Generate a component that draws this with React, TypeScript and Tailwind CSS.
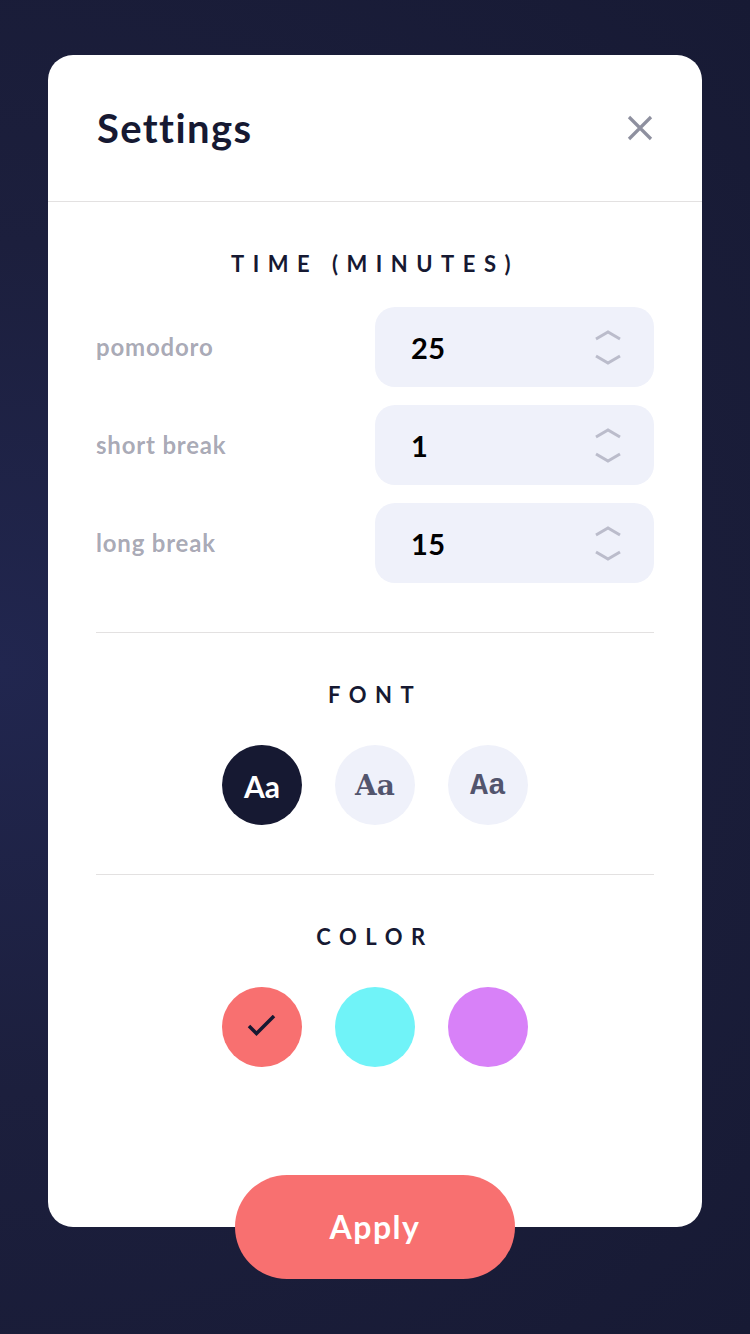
import React from "react";

const Chevron = ({ up }: { up?: boolean }) => (
  <svg width="28" height="12" viewBox="0 0 28 12" fill="none">
    <path
      d={up ? "M2 10L14 3L26 10" : "M2 2L14 9L26 2"}
      stroke="#1E213F"
      strokeOpacity="0.25"
      strokeWidth="3"
    />
  </svg>
);

const Row = ({ label, value }: { label: string; value: string }) => (
  <div className="flex items-center justify-between">
    <span className="text-[24px] font-bold leading-none tracking-[0.8px] text-[#1E213F]/40">{label}</span>
    <div className="flex h-[80px] w-[279px] items-center justify-between rounded-[20px] bg-[#EFF1FA] pl-[36px] pr-[32px]">
      <span className="text-[29px] font-bold leading-none tracking-[0.5px] text-black">{value}</span>
      <div className="flex flex-col gap-[13px]">
        <Chevron up />
        <Chevron />
      </div>
    </div>
  </div>
);

const Heading = ({ children }: { children: React.ReactNode }) => (
  <h2 className="text-center text-[22px] font-bold leading-[28px] tracking-[8.5px] text-[#161932]">
    {children}
  </h2>
);

export default function App() {
  return (
    <div
      className="flex min-h-[1334px] flex-col items-stretch bg-[radial-gradient(ellipse_at_0%_50%,#21264f_0%,#1c1f3d_45%,#171a34_100%)] px-[48px] pt-[55px]"
      style={{ fontFamily: "Lato, 'Noto Sans', sans-serif" }}
    >
      <div className="rounded-[25px] bg-white">
        <div className="flex h-[147px] items-center justify-between border-b border-[#E3E1E1] pl-[49px] pr-[49px]">
          <h1 className="text-[40px] font-bold leading-none tracking-[1.4px] text-[#161932]">Settings</h1>
          <svg width="26" height="26" viewBox="0 0 26 26" fill="none">
            <path d="M2 2L24 24M24 2L2 24" stroke="#1E213F" strokeOpacity="0.5" strokeWidth="3.2" />
          </svg>
        </div>
        <div className="px-[48px] pb-[160px] pt-[48px]">
          <Heading>TIME (MINUTES)</Heading>
          <div className="mt-[29px] flex flex-col gap-[18px]">
            <Row label="pomodoro" value="25" />
            <Row label="short break" value="1" />
            <Row label="long break" value="15" />
          </div>
          <div className="mt-[49px] border-t border-[#E3E1E1] pt-[48px]">
            <Heading>FONT</Heading>
            <div className="mt-[36px] flex justify-center gap-[33px]">
              <div className="flex h-[80px] w-[80px] items-center justify-center rounded-full bg-[#161932] pt-[2px] text-[30px] font-bold text-white">
                Aa
              </div>
              <div
                className="flex h-[80px] w-[80px] items-center justify-center rounded-full bg-[#EFF1FA] pt-[2px] text-[28px] font-bold text-[#1E213F]/75"
                style={{ fontFamily: "'DejaVu Serif', serif" }}
              >
                Aa
              </div>
              <div
                className="flex h-[80px] w-[80px] items-center justify-center rounded-full bg-[#EFF1FA] pt-[2px] text-[30px] font-bold text-[#1E213F]/75"
                style={{ fontFamily: "'Liberation Mono', monospace" }}
              >
                Aa
              </div>
            </div>
          </div>
          <div className="mt-[49px] border-t border-[#E3E1E1] pt-[48px]">
            <Heading>COLOR</Heading>
            <div className="mt-[36px] flex justify-center gap-[33px]">
              <div className="flex h-[80px] w-[80px] items-center justify-center rounded-full bg-[#F87070]">
                <svg width="30" height="24" viewBox="0 0 30 24" fill="none">
                  <path d="M2 11L9.5 18.5L27 1" stroke="#161932" strokeWidth="3.5" />
                </svg>
              </div>
              <div className="h-[80px] w-[80px] rounded-full bg-[#70F3F8]" />
              <div className="h-[80px] w-[80px] rounded-full bg-[#D881F8]" />
            </div>
          </div>
        </div>
      </div>
      <button className="relative -mt-[52px] h-[104px] w-[280px] self-center rounded-full bg-[#F87070] text-[32px] font-bold tracking-[1.5px] text-white">
        Apply
      </button>
    </div>
  );
}
